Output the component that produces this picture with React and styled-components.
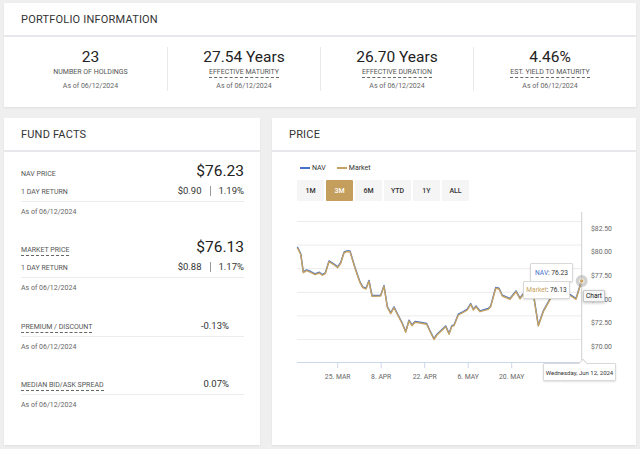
import React from "react";
import styled, { createGlobalStyle } from "styled-components";

const GOLD = "#c6a262";
const BLUE = "#4571c8";

const GlobalStyle = createGlobalStyle`
  body {
    margin: 0;
    background: #efefef;
    font-family: Roboto, "Liberation Sans", sans-serif;
    color: #333;
  }
`;

const Page = styled.div`
  width: 640px;
  height: 449px;
  box-sizing: border-box;
  padding: 3px 4px 4px;
  display: flex;
  flex-direction: column;
  gap: 11px;
`;

const Card = styled.section`
  background: #fff;
  box-shadow: 0 1px 2px rgba(0, 0, 0, 0.07);
  display: flex;
  flex-direction: column;
`;

const CardHeader = styled.h2`
  margin: 0;
  height: 32px;
  display: flex;
  align-items: center;
  padding: 0 17px;
  font-size: 11px;
  font-weight: 400;
  letter-spacing: 0.2px;
  color: #333;
  border-bottom: 2px solid #e6e8eb;
`;

// portfolio stats
const Stats = styled.div`
  display: grid;
  grid-template-columns: repeat(4, 1fr);
  padding: 10px 10px 16px;
`;

const Stat = styled.div`
  display: flex;
  flex-direction: column;
  align-items: center;
  & + & {
    border-left: 1px solid #e9e9e9;
  }
`;

const StatValue = styled.div`
  font-size: 15.5px;
  line-height: 20px;
  color: #222;
`;

const Term = styled.span`
  font-size: 7px;
  line-height: 9px;
  color: #555;
  text-transform: uppercase;
  border-bottom: 1px ${(p) => (p.$dashed ? "dashed #666" : "solid transparent")};
`;

const StatTerm = styled(Term)`
  margin-top: 1px;
`;

const AsOf = styled.div`
  font-size: 7px;
  line-height: 10px;
  color: #666;
  margin-top: ${(p) => p.$top || 3}px;
`;

// fund facts
const Columns = styled.div`
  flex: 1;
  display: grid;
  grid-template-columns: 256px 1fr;
  gap: 12px;
`;

const FundBody = styled.div`
  padding: 9px 16px 0 17px;
`;

const Block = styled.div`
  margin-top: ${(p) => p.$top || 0}px;
`;

const Rows = styled.div`
  padding-bottom: 3px;
  border-bottom: 1px solid #ececec;
  display: flex;
  flex-direction: column;
  gap: 3px;
`;

const Row = styled.div`
  display: flex;
  justify-content: space-between;
  align-items: baseline;
`;

const BigValue = styled.div`
  font-size: 15.5px;
  line-height: 20px;
  color: #222;
`;

const SmallValue = styled.div`
  font-size: 9.5px;
  line-height: 13px;
  color: #333;
  padding-right: ${(p) => (p.$inset ? 15 : 0)}px;
  display: flex;
  align-items: center;
  gap: 8px;
`;

const Pipe = styled.span`
  width: 1px;
  height: 10px;
  background: #9a9a9a;
`;

// price
const Legend = styled.div`
  display: flex;
  gap: 11px;
  margin: 11px 0 0 28px;
  font-size: 7px;
  line-height: 10px;
  color: #333;
`;

const LegendItem = styled.span`
  display: flex;
  align-items: center;
  gap: 2px;
  &::before {
    content: "";
    width: 10px;
    height: 2px;
    background: ${(p) => p.$color};
  }
`;

const Ranges = styled.div`
  display: flex;
  gap: 2px;
  margin: 7px 0 0 25px;
`;

const RangeButton = styled.button`
  width: 27px;
  height: 21px;
  padding: 0;
  border: none;
  border-radius: 1px;
  font-family: inherit;
  font-size: 7px;
  font-weight: 500;
  color: ${(p) => (p.$active ? "#fff" : "#333")};
  background: ${(p) => (p.$active ? "#c49e5c" : "#f5f5f5")};
`;

const ChartWrap = styled.div`
  position: relative;
  margin-top: 4px;
  height: 185px;
`;

const Tip = styled.div`
  position: absolute;
  left: ${(p) => p.$x}px;
  top: ${(p) => p.$y}px;
  width: ${(p) => p.$w}px;
  height: ${(p) => p.$h}px;
  box-sizing: border-box;
  display: flex;
  align-items: center;
  justify-content: center;
  background: rgba(255, 255, 255, 0.97);
  border: 1px solid #d9d9d9;
  border-radius: 1px;
  box-shadow: 0 1px 2px rgba(0, 0, 0, 0.12);
  font-size: ${(p) => p.$size || 6.6}px;
  color: #333;
  white-space: nowrap;
`;

const DateTip = styled(Tip)`
  &::before {
    content: "";
    position: absolute;
    left: 36px;
    top: -4px;
    width: 5px;
    height: 5px;
    background: #fff;
    border-left: 1px solid #d9d9d9;
    border-top: 1px solid #d9d9d9;
    transform: rotate(45deg);
  }
`;

const NativeTip = styled(Tip)`
  background: #f7f7f7;
  border-color: #c8c8c8;
  color: #111;
  box-shadow: 0 1px 3px rgba(0, 0, 0, 0.25);
`;

const Key = styled.span`
  color: ${(p) => p.$color};
`;

const points = [
  [297.3, 247.7], [300.7, 254.3], [303.3, 272.7], [306.7, 270.7], [310.7, 272.3],
  [315, 274.7], [319.3, 273], [322.3, 275.3], [325.3, 273.7], [329, 261.7],
  [333.3, 264.3], [337.7, 267.7], [340.7, 263.3], [344, 253], [346.7, 251.7],
  [350, 251.7], [355, 268.3], [360, 282.7], [362.7, 287.7], [366, 289],
  [369, 281.3], [372, 296.3], [380.7, 296], [384, 286.3], [387.3, 307.3],
  [390.7, 313.7], [394, 307.7], [397.3, 314.3], [402, 323.3], [405.7, 332.3],
  [409, 321], [412, 325.7], [415, 322.3], [420, 323], [426.7, 324.3],
  [430, 331.5], [434, 339.5], [437, 335], [445.7, 326.7], [449, 334.3],
  [451.7, 326.7], [454, 325.7], [458.3, 315], [463.3, 312.3], [467.3, 310],
  [470.7, 304.3], [473.3, 310], [476, 306.7], [480, 311.7], [488.3, 309.3],
  [490.7, 306.7], [495.7, 288.3], [499, 289], [502.3, 296], [510, 299.3],
  [516, 291.7], [520, 299], [522.7, 295], [527, 296], [533.3, 294],
  [538.3, 326], [543.3, 311.7], [551.7, 296.7], [556, 292], [561, 290],
  [566, 293], [571, 296], [576, 299.3], [581.7, 281],
];

const toPath = (pts, dy = 0) =>
  "M" + pts.map(([x, y]) => `${x},${(y + dy).toFixed(1)}`).join(" L");

const grid = [
  [221.5, "$82.50"],
  [245.1, "$80.00"],
  [268.7, "$77.50"],
  [292.3, "$75.00"],
  [315.9, "$72.50"],
  [339.5, "$70.00"],
];

const ticks = [
  [337.7, "25. MAR"],
  [381.2, "8. APR"],
  [424.7, "22. APR"],
  [468.2, "6. MAY"],
  [511.7, "20. MAY"],
  [555.2, "3. JUN"],
];

// chart drawn in page coordinates (card starts at x 272, chart at y 205)
function PriceChart() {
  return (
    <ChartWrap>
      <svg width="364" height="185" viewBox="272 205 364 185" style={{ display: "block" }}>
        {grid.map(([y, label]) => (
          <g key={label}>
            <line x1="297" x2="582" y1={y} y2={y} stroke="#ececec" strokeWidth="1" />
            <text x="591" y={y + 9.2} fontSize="6.8" fill="#666" fontFamily="Roboto, sans-serif">
              {label}
            </text>
          </g>
        ))}
        <line x1="297" x2="582" y1="362.5" y2="362.5" stroke="#ccd6eb" strokeWidth="1" />
        {ticks.map(([x, label]) => (
          <g key={label}>
            <line x1={x} x2={x} y1="362.5" y2="368" stroke="#ccd6eb" strokeWidth="1" />
            <text x={x} y="379" fontSize="6.8" fill="#666" textAnchor="middle" fontFamily="Roboto, sans-serif">
              {label}
            </text>
          </g>
        ))}
        <line x1="581.7" x2="581.7" y1="212" y2="363" stroke="#cfcfcf" strokeWidth="1" />
        <path d={toPath(points, -0.8)} fill="none" stroke={BLUE} strokeWidth="1.4" strokeLinejoin="round" />
        <path d={toPath(points)} fill="none" stroke={GOLD} strokeWidth="1.4" strokeLinejoin="round" />
        <circle cx="581.7" cy="281" r="6" fill="#9a9a9a" opacity="0.45" />
        <circle cx="581.7" cy="281" r="2.2" fill={GOLD} stroke="#fff" strokeWidth="0.8" />
      </svg>
      <Tip $x={258} $y={58} $w={43} $h={19}>
        <Key $color={BLUE}>NAV</Key>: 76.23
      </Tip>
      <Tip $x={251} $y={76} $w={47} $h={18}>
        <Key $color={GOLD}>Market</Key>: 76.13
      </Tip>
      <NativeTip $x={311} $y={85} $w={22} $h={12}>
        Chart
      </NativeTip>
      <DateTip $x={271} $y={158} $w={73} $h={18} $size={6}>
        Wednesday, Jun 12, 2024
      </DateTip>
    </ChartWrap>
  );
}

const stats = [
  { value: "23", term: "Number of Holdings" },
  { value: "27.54 Years", term: "Effective Maturity", dashed: true },
  { value: "26.70 Years", term: "Effective Duration", dashed: true },
  { value: "4.46%", term: "Est. Yield to Maturity", dashed: true },
];

const ranges = ["1M", "3M", "6M", "YTD", "1Y", "ALL"];

export default function App() {
  return (
    <>
      <GlobalStyle />
      <Page>
        <Card>
          <CardHeader>PORTFOLIO INFORMATION</CardHeader>
          <Stats>
            {stats.map((s) => (
              <Stat key={s.term}>
                <StatValue>{s.value}</StatValue>
                <StatTerm $dashed={s.dashed}>{s.term}</StatTerm>
                <AsOf>As of 06/12/2024</AsOf>
              </Stat>
            ))}
          </Stats>
        </Card>
        <Columns>
          <Card>
            <CardHeader>FUND FACTS</CardHeader>
            <FundBody>
              <Block>
                <Rows>
                  <Row>
                    <Term>NAV Price</Term>
                    <BigValue>$76.23</BigValue>
                  </Row>
                  <Row>
                    <Term>1 Day Return</Term>
                    <SmallValue>
                      $0.90 <Pipe /> 1.19%
                    </SmallValue>
                  </Row>
                </Rows>
                <AsOf $top={5}>As of 06/12/2024</AsOf>
              </Block>
              <Block $top={20}>
                <Rows>
                  <Row>
                    <Term $dashed>Market Price</Term>
                    <BigValue>$76.13</BigValue>
                  </Row>
                  <Row>
                    <Term>1 Day Return</Term>
                    <SmallValue>
                      $0.88 <Pipe /> 1.17%
                    </SmallValue>
                  </Row>
                </Rows>
                <AsOf $top={5}>As of 06/12/2024</AsOf>
              </Block>
              <Block $top={26}>
                <Rows>
                  <Row>
                    <Term $dashed>Premium / Discount</Term>
                    <SmallValue $inset>-0.13%</SmallValue>
                  </Row>
                </Rows>
                <AsOf $top={5}>As of 06/12/2024</AsOf>
              </Block>
              <Block $top={25}>
                <Rows>
                  <Row>
                    <Term $dashed>Median Bid/Ask Spread</Term>
                    <SmallValue $inset>0.07%</SmallValue>
                  </Row>
                </Rows>
                <AsOf $top={5}>As of 06/12/2024</AsOf>
              </Block>
            </FundBody>
          </Card>
          <Card>
            <CardHeader>PRICE</CardHeader>
            <Legend>
              <LegendItem $color={BLUE}>NAV</LegendItem>
              <LegendItem $color={GOLD}>Market</LegendItem>
            </Legend>
            <Ranges>
              {ranges.map((r) => (
                <RangeButton key={r} $active={r === "3M"}>
                  {r}
                </RangeButton>
              ))}
            </Ranges>
            <PriceChart />
          </Card>
        </Columns>
      </Page>
    </>
  );
}
